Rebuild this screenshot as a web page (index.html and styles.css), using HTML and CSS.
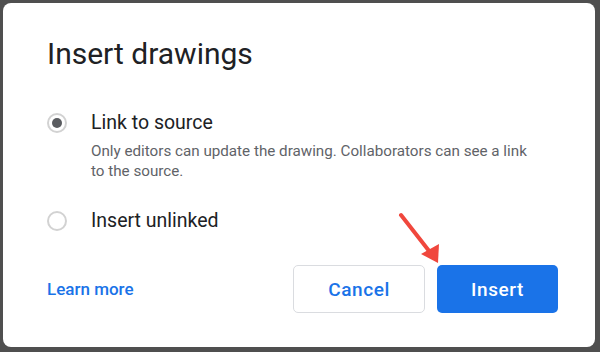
FILE: index.html
```html
<!DOCTYPE html>
<html lang="en">
<head>
    <meta charset="UTF-8">
    <meta name="viewport" content="width=device-width, initial-scale=1.0">
    <title>Insert drawings</title>
    <link rel="stylesheet" href="styles.css">
</head>
<body>
    <div class="dialog">
        <h1>Insert drawings</h1>

        <div class="options">
            <label class="option">
                <span class="radio checked"></span>
                <span class="option-label">Link to source</span>
            </label>
            <p class="option-help">Only editors can update the drawing. Collaborators can see a link to the source.</p>

            <label class="option option-second">
                <span class="radio"></span>
                <span class="option-label">Insert unlinked</span>
            </label>
        </div>

        <div class="footer">
            <a class="learn-more" href="#">Learn more</a>
            <div class="button-container">
                <button class="btn btn-cancel">Cancel</button>
                <button class="btn btn-insert">Insert</button>
            </div>
        </div>

        <svg class="arrow" width="50" height="60" viewBox="0 0 50 60">
            <line x1="6" y1="5" x2="38" y2="46" stroke="#f0473d" stroke-width="4" stroke-linecap="round"/>
            <polygon points="43,53 26,44 44,34" fill="#f0473d"/>
        </svg>
    </div>
</body>
</html>
```

FILE: styles.css
```css
body {
    margin: 0;
    padding: 3px 5px 5px 3px;
    background-color: #4f4f4f;
    font-family: Roboto, "Liberation Sans", sans-serif;
    color: #202124;
}

.dialog {
    position: relative;
    height: 344px;
    box-sizing: border-box;
    padding: 33px 37px 0 44px;
    background: #ffffff;
    border-radius: 8px;
}

h1 {
    margin: 0;
    font-size: 30px;
    line-height: 36px;
    font-weight: 400;
    color: #202124;
}

.options {
    margin-top: 39px;
}

.option {
    display: flex;
    align-items: center;
    height: 24px;
}

.option-second {
    margin-top: 28px;
}

.radio {
    width: 20px;
    height: 20px;
    box-sizing: border-box;
    border: 2px solid #d2d2d2;
    border-radius: 50%;
    display: flex;
    align-items: center;
    justify-content: center;
    margin-right: 24px;
}

.radio.checked::after {
    content: "";
    width: 10px;
    height: 10px;
    border-radius: 50%;
    background: #5a5c60;
}

.option-label {
    font-size: 19.5px;
    line-height: 24px;
}

.option-help {
    max-width: 445px;
    margin: 6px 0 0 44px;
    font-size: 15.2px;
    line-height: 20px;
    color: #5f6368;
}

.footer {
    display: flex;
    justify-content: space-between;
    align-items: center;
    margin-top: 32px;
}

.learn-more {
    color: #1a73e8;
    font-size: 17px;
    font-weight: 500;
    text-decoration: none;
}

.button-container {
    display: flex;
    gap: 12px;
}

.btn {
    height: 48px;
    padding: 0 34px;
    border-radius: 5px;
    font-family: Roboto, "Liberation Sans", sans-serif;
    font-size: 19px;
    font-weight: 500;
    letter-spacing: 0.6px;
    cursor: pointer;
}

.btn-cancel {
    background: #ffffff;
    color: #1a73e8;
    border: 1px solid #dadce0;
}

.btn-insert {
    background: #1a73e8;
    color: #ffffff;
    border: none;
}

.arrow {
    position: absolute;
    left: 392px;
    top: 207px;
}
```
